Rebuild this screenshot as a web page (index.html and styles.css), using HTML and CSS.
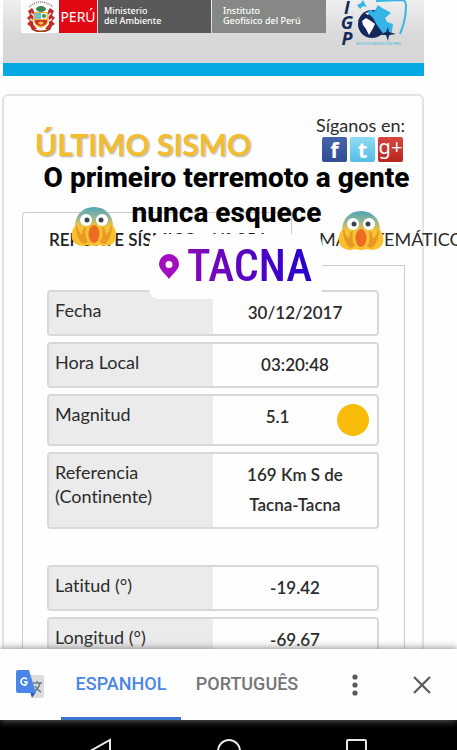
FILE: index.html
```html
<!DOCTYPE html>
<html lang="es">
<head>
  <meta charset="utf-8">
  <meta name="viewport" content="width=device-width, initial-scale=1">
  <title>Último Sismo</title>
  <link rel="stylesheet" href="styles.css">
</head>
<body>
  <main class="page">
    <header class="header">
      <div class="escudo">
        <svg width="28" height="32" viewBox="0 0 28 32">
          <path d="M2 7Q14-3 26 7" fill="none" stroke="#777" stroke-width="1.5" stroke-dasharray="1 1"/>
          <path d="M1 11L5 8L7 11L6 24L10 29L5 30L3 26L0 24L3 21L0 18L3 15Z" fill="#c32a26"/>
          <path d="M27 11L23 8L21 11L22 24L18 29L23 30L25 26L28 24L25 21L28 18L25 15Z" fill="#c32a26"/>
          <path d="M4 13L8 17M3 19L8 22M24 13L20 17M25 19L20 22" stroke="#f3dfd5" stroke-width="1.5"/>
          <ellipse cx="14" cy="9" rx="5" ry="3" fill="#3c8450"/>
          <path d="M7 12H21V21Q21 26 14 28Q7 26 7 21Z" fill="#e9b43a"/>
          <path d="M8 13H14V19H8Z" fill="#68c4cf"/>
          <path d="M14 13H20V19H14Z" fill="#edf2e4"/>
          <path d="M8 20H20V22Q19 25 14 26Q9 25 8 22Z" fill="#cf3027"/>
          <circle cx="17" cy="16" r="2" fill="#3c9454"/>
          <path d="M11 23Q14 20 17 23L14 25Z" fill="#f5c83c"/>
          <path d="M5 29Q14 34 23 29" fill="none" stroke="#a33c22" stroke-width="2"/>
        </svg>
      </div>
      <div class="peru">PERÚ</div>
      <div class="ministerio">Ministerio<br>del Ambiente</div>
      <div class="instituto">Instituto<br>Geofísico del Perú</div>
      <div class="igp">
        <div class="igp-letters"><span>I</span><span>G</span><span>P</span></div>
        <svg width="56" height="42" viewBox="4 0 56 42">
          <path d="M24 1L51 0Q54 1 54 6Q54 20 48 34" fill="none" stroke="#35b5e5" stroke-width="2"/>
          <path d="M5 5L9 3L11 0L13 4L15 7L11 6L8 9Z" fill="#35b5e5"/>
          <circle cx="20" cy="24" r="14" fill="#14295b"/>
          <path d="M10 21L14 18L19 21L23 24L20 30L17 35L14 29L11 25Z" fill="#fff"/>
          <path d="M13 13L19 12L16 15Z" fill="#fff"/>
          <path d="M15 12L19 10L22 12L26 5L30 8L36 11L39 13L33 18L35 22L41 24L40 31L38 36L30 32L25 25L21 18Z" fill="#35b5e5"/>
          <path d="M36 27L37 32L44 34L37 35L36 41L34 35L27 35L34 32Z" fill="#14295b"/>
        </svg>
        <small>INSTITUTO GEOFISICO DEL PERU</small>
      </div>
    </header>

    <section class="card">
      <div class="card-head">
        <h1>ÚLTIMO SISMO</h1>
        <div class="social">
          <span>Síganos en:</span>
          <div class="social-links">
            <a class="fb" href="#" aria-label="Facebook">f</a>
            <a class="tw" href="#" aria-label="Twitter">t</a>
            <a class="gp" href="#" aria-label="Google+">g+</a>
          </div>
        </div>
      </div>

      <div class="tabs">
        <button type="button" class="tab active">REPORTE SÍSMICO - N° 254</button>
        <button type="button" class="tab">MAPA TEMÁTICO</button>
      </div>
      <div class="panel">
        <dl class="row"><dt>Fecha</dt><dd>30/12/2017</dd></dl>
        <dl class="row"><dt>Hora Local</dt><dd>03:20:48</dd></dl>
        <dl class="row magnitud"><dt>Magnitud</dt><dd>5.1<i class="dot"></i></dd></dl>
        <dl class="row referencia"><dt>Referencia (Continente)</dt><dd>169 Km S de<br>Tacna-Tacna</dd></dl>
        <dl class="row"><dt>Latitud (°)</dt><dd>-19.42</dd></dl>
        <dl class="row"><dt>Longitud (°)</dt><dd>-69.67</dd></dl>
      </div>
    </section>
  </main>

  <div class="translate">
    <svg class="translate-icon" width="28" height="29" viewBox="0 0 28 29">
      <path d="M12 5H26Q28 5 28 7V26Q28 28 26 28H17Z" fill="#dcdcdc"/>
      <path d="M17 13H26M21 11V13M24 13Q23 18 18 22M19 16Q21 20 25 22" fill="none" stroke="#6c7c80" stroke-width="1.5"/>
      <path d="M14 22H20L16 28Z" fill="#3556b5"/>
      <path d="M2 0H13L20 23H2Q0 23 0 21V2Q0 0 2 0Z" fill="#4a86e8"/>
      <path d="M11 9Q8 7 6 9Q4 12 6 14Q8 16 10 14.500Q11 14 11 12H8" fill="none" stroke="#fff" stroke-width="1.600"/>
    </svg>
    <button type="button" class="lang selected">ESPANHOL</button>
    <button type="button" class="lang">PORTUGUÊS</button>
    <button type="button" class="icon-btn more" aria-label="Mais">
      <svg width="6" height="22" viewBox="0 0 6 22" fill="#5a5a5a"><circle cx="3" cy="3" r="2.600"/><circle cx="3" cy="11" r="2.600"/><circle cx="3" cy="19" r="2.600"/></svg>
    </button>
    <button type="button" class="icon-btn" aria-label="Fechar">
      <svg width="18" height="18" viewBox="0 0 18 18" stroke="#5a5a5a" stroke-width="2.200"><path d="M1 1L17 17M17 1L1 17"/></svg>
    </button>
  </div>

  <nav class="navbar">
    <svg width="22" height="24" viewBox="0 0 22 24"><path d="M20 2V22L2 12Z"/></svg>
    <svg width="26" height="26" viewBox="0 0 26 26"><circle cx="13" cy="13" r="11"/></svg>
    <svg width="22" height="22" viewBox="0 0 22 22"><rect x="1" y="2" width="19" height="19" rx="1"/></svg>
  </nav>

  <!-- story stickers -->
  <svg class="emoji emoji-left" viewBox="0 0 46 40">
    <defs>
      <linearGradient id="face" x1="0" y1="0" x2="0" y2="1">
        <stop offset="0" stop-color="#4fa5b8"/>
        <stop offset=".25" stop-color="#8fb496"/>
        <stop offset=".5" stop-color="#f4c43c"/>
        <stop offset="1" stop-color="#fbc02d"/>
      </linearGradient>
    </defs>
    <g id="scream">
      <path d="M23 0C11 0 4 9 4 19C4 30 10 39 23 39S42 30 42 19C42 9 35 0 23 0Z" fill="url(#face)"/>
      <circle cx="15" cy="13" r="6" fill="#fff"/>
      <circle cx="31" cy="13" r="6" fill="#fff"/>
      <circle cx="16" cy="13" r="2.500" fill="#37474f"/>
      <circle cx="30" cy="13" r="2.500" fill="#37474f"/>
      <path d="M3 20Q6 17 7 22L9 27L12 22Q15 18 15 24Q14 31 17 35Q17 39 12 39Q4 39 1 32Q0 25 3 20Z" fill="#fbc02d"/>
      <path d="M43 20Q40 17 39 22L37 27L34 22Q31 18 31 24Q32 31 29 35Q29 39 34 39Q42 39 45 32Q46 25 43 20Z" fill="#fbc02d"/>
      <path d="M5 19Q7 18 7 23L11 28Q12 19 15 20Q13 29 17 35Q14 38 11 36Q5 30 5 19ZM41 19Q39 18 39 23L35 28Q34 19 31 20Q33 29 29 35Q32 38 35 36Q41 30 41 19Z" fill="#e89a25"/>
      <ellipse cx="23" cy="27" rx="5.500" ry="9" fill="#ee6c22"/>
    </g>
  </svg>
  <svg class="emoji emoji-right" viewBox="0 0 46 40"><use href="#scream"/></svg>
  <div class="place">
    <svg width="20" height="25" viewBox="0 0 20 25"><path fill="#a30dbe" fill-rule="evenodd" d="M10 0A10 10 0 0 0 0 10C0 16 7 20 10 25C13 20 20 16 20 10A10 10 0 0 0 10 0ZM10 7A3.500 3.500 0 1 1 10 14A3.500 3.500 0 1 1 10 7Z"/></svg>
    <span>TACNA</span>
  </div>
  <p class="caption">O primeiro terremoto a gente nunca esquece</p>
</body>
</html>
```

FILE: styles.css
```css
* { box-sizing: border-box; }
body {
  margin: 0;
  height: 100vh;
  display: flex;
  flex-direction: column;
  position: relative;
  overflow: hidden;
  background: #fefefe;
  color: #2b2b2b;
  font-family: Lato, sans-serif;
  font-size: 18px;
  font-variant-ligatures: none;
}
button { border: 0; padding: 0; background: none; font: inherit; color: inherit; cursor: pointer; }

.page { flex: 1; min-height: 0; overflow: hidden; padding: 0 33px 0 2px; }

/* header */
.header {
  display: flex;
  align-items: flex-start;
  height: 76px;
  margin-left: 1px;
  padding-left: 18px;
  border-bottom: 13px solid #04a9e4;
  background: linear-gradient(#efefef, #d9d9d9 35px, #d6d6d6);
  color: #fff;
}
.header > div { height: 33px; }
.escudo { width: 38px; padding-left: 6px; background: #fff; }
.peru { width: 38px; margin-right: 1px; background: #e30613; font: 14px/34px "Noto Sans", sans-serif; text-align: center; }
.ministerio, .instituto { padding: 6px 0 0 6px; font: 500 9px/10px "Noto Sans", sans-serif; white-space: nowrap; }
.ministerio { width: 113px; margin-right: 1px; background: #595959; }
.instituto { width: 114px; padding-left: 11px; background: #858885; }
.header .igp { display: grid; grid-template-columns: 18px 56px; height: 48px; margin-left: 12px; position: relative; }
.igp-letters { display: grid; grid-template-rows: 14px 16px 16px; align-items: center; height: 46px; color: #14295b; font: italic bold 18px/14px "Open Sans", sans-serif; text-align: center; }
.igp small { position: absolute; left: 18px; bottom: 2px; color: #35b5e5; font: 3px/4px Roboto, sans-serif; white-space: nowrap; }

/* card */
.card { margin-top: 18px; padding: 17px 17px 0 18px; border: 2px solid #e2e2e2; border-radius: 6px; }
.card-head { display: flex; justify-content: space-between; height: 99px; padding-left: 13px; }
h1 { margin: 13px 0 0; color: #f3bd2b; font-size: 30px; line-height: 36px; text-shadow: 1px 1px 2px #aaa; }
.social { line-height: 24px; }
.social-links { display: flex; gap: 3px; padding-left: 6px; }
.social-links a { width: 25px; height: 25px; border-radius: 2px; color: #fff; font: bold 22px/25px "Open Sans", sans-serif; text-align: center; text-decoration: none; }
.social-links .fb { background: linear-gradient(#4564a9, #2f4d92); }
.social-links .tw { background: linear-gradient(#8fdcf3, #55bde5); }
.social-links .gp { background: linear-gradient(#d9453c, #b8271f); font: 20px/20px "Noto Sans", sans-serif; white-space: nowrap; }

.tabs { display: flex; height: 54px; margin-bottom: -1px; }
.tab { flex: none; padding: 0 0 0 27px; white-space: nowrap; text-align: left; }
.tab.active { width: 270px; padding-left: 26px; border: 1px solid #ccc; border-bottom: 0; border-radius: 4px 0 0 0; background: #fefefe; color: #222; font-size: 17px; font-weight: 600; }
.panel { display: flex; flex-direction: column; gap: 6px; padding: 24px 25px 0 24px; border: 1px solid #ccc; }

.row { display: grid; grid-template-columns: 1fr 1fr; min-height: 46px; margin: 0; border: 2px solid #d8d8d8; border-radius: 4px; line-height: 24px; }
.row dt { padding: 6px 40px 0 6px; background: #ebebeb; }
.row dd { position: relative; margin: 0; padding-top: 6px; font-size: 17px; font-weight: 600; line-height: 30px; text-align: center; }
.magnitud { min-height: 52px; }
.magnitud dd { padding-right: 35px; }
.dot { position: absolute; right: 8px; top: 8px; width: 32px; height: 32px; border-radius: 50%; background: #fabc0b; }
.referencia { min-height: 77px; margin-bottom: 30px; }

/* translate bar */
.translate { display: flex; align-items: center; height: 71px; padding: 0 26px 0 16px; background: #fefefe; box-shadow: 0 0 8px #777; position: relative; font: 500 18px Roboto, sans-serif; }
.translate-icon { margin-right: 17px; }
.lang { align-self: stretch; width: 120px; border-bottom: 3px solid transparent; color: #757575; }
.lang.selected { border-color: #3b72d0; color: #4a86e8; }
.lang + .lang { width: 132px; }
.icon-btn { display: flex; }
.more { margin: 0 auto 0 39px; }

.navbar { display: flex; align-items: flex-start; justify-content: center; gap: 104px; height: 30px; padding-top: 18px; background: #000; overflow: hidden; }
.navbar svg { flex: none; fill: none; stroke: #e8e8e8; stroke-width: 2; }

/* stickers */
.emoji { position: absolute; width: 46px; height: 40px; }
.emoji-left { left: 71px; top: 207px; }
.emoji-right { left: 338px; top: 211px; }
.place { position: absolute; left: 149px; top: 234px; display: flex; align-items: center; gap: 8px; height: 65px; padding: 0 10px; border-radius: 10px; background: #fefefe; }
.place span { background: linear-gradient(90deg, #8a08b8, #2400d0); -webkit-background-clip: text; background-clip: text; color: transparent; font: 500 44px/65px "Roboto Condensed", "Liberation Sans Narrow", Roboto, sans-serif; }
.caption { position: absolute; left: 30px; right: 34px; top: 160px; margin: 0; color: #000; font: 800 28px/35px Roboto, sans-serif; text-align: center; }
```
